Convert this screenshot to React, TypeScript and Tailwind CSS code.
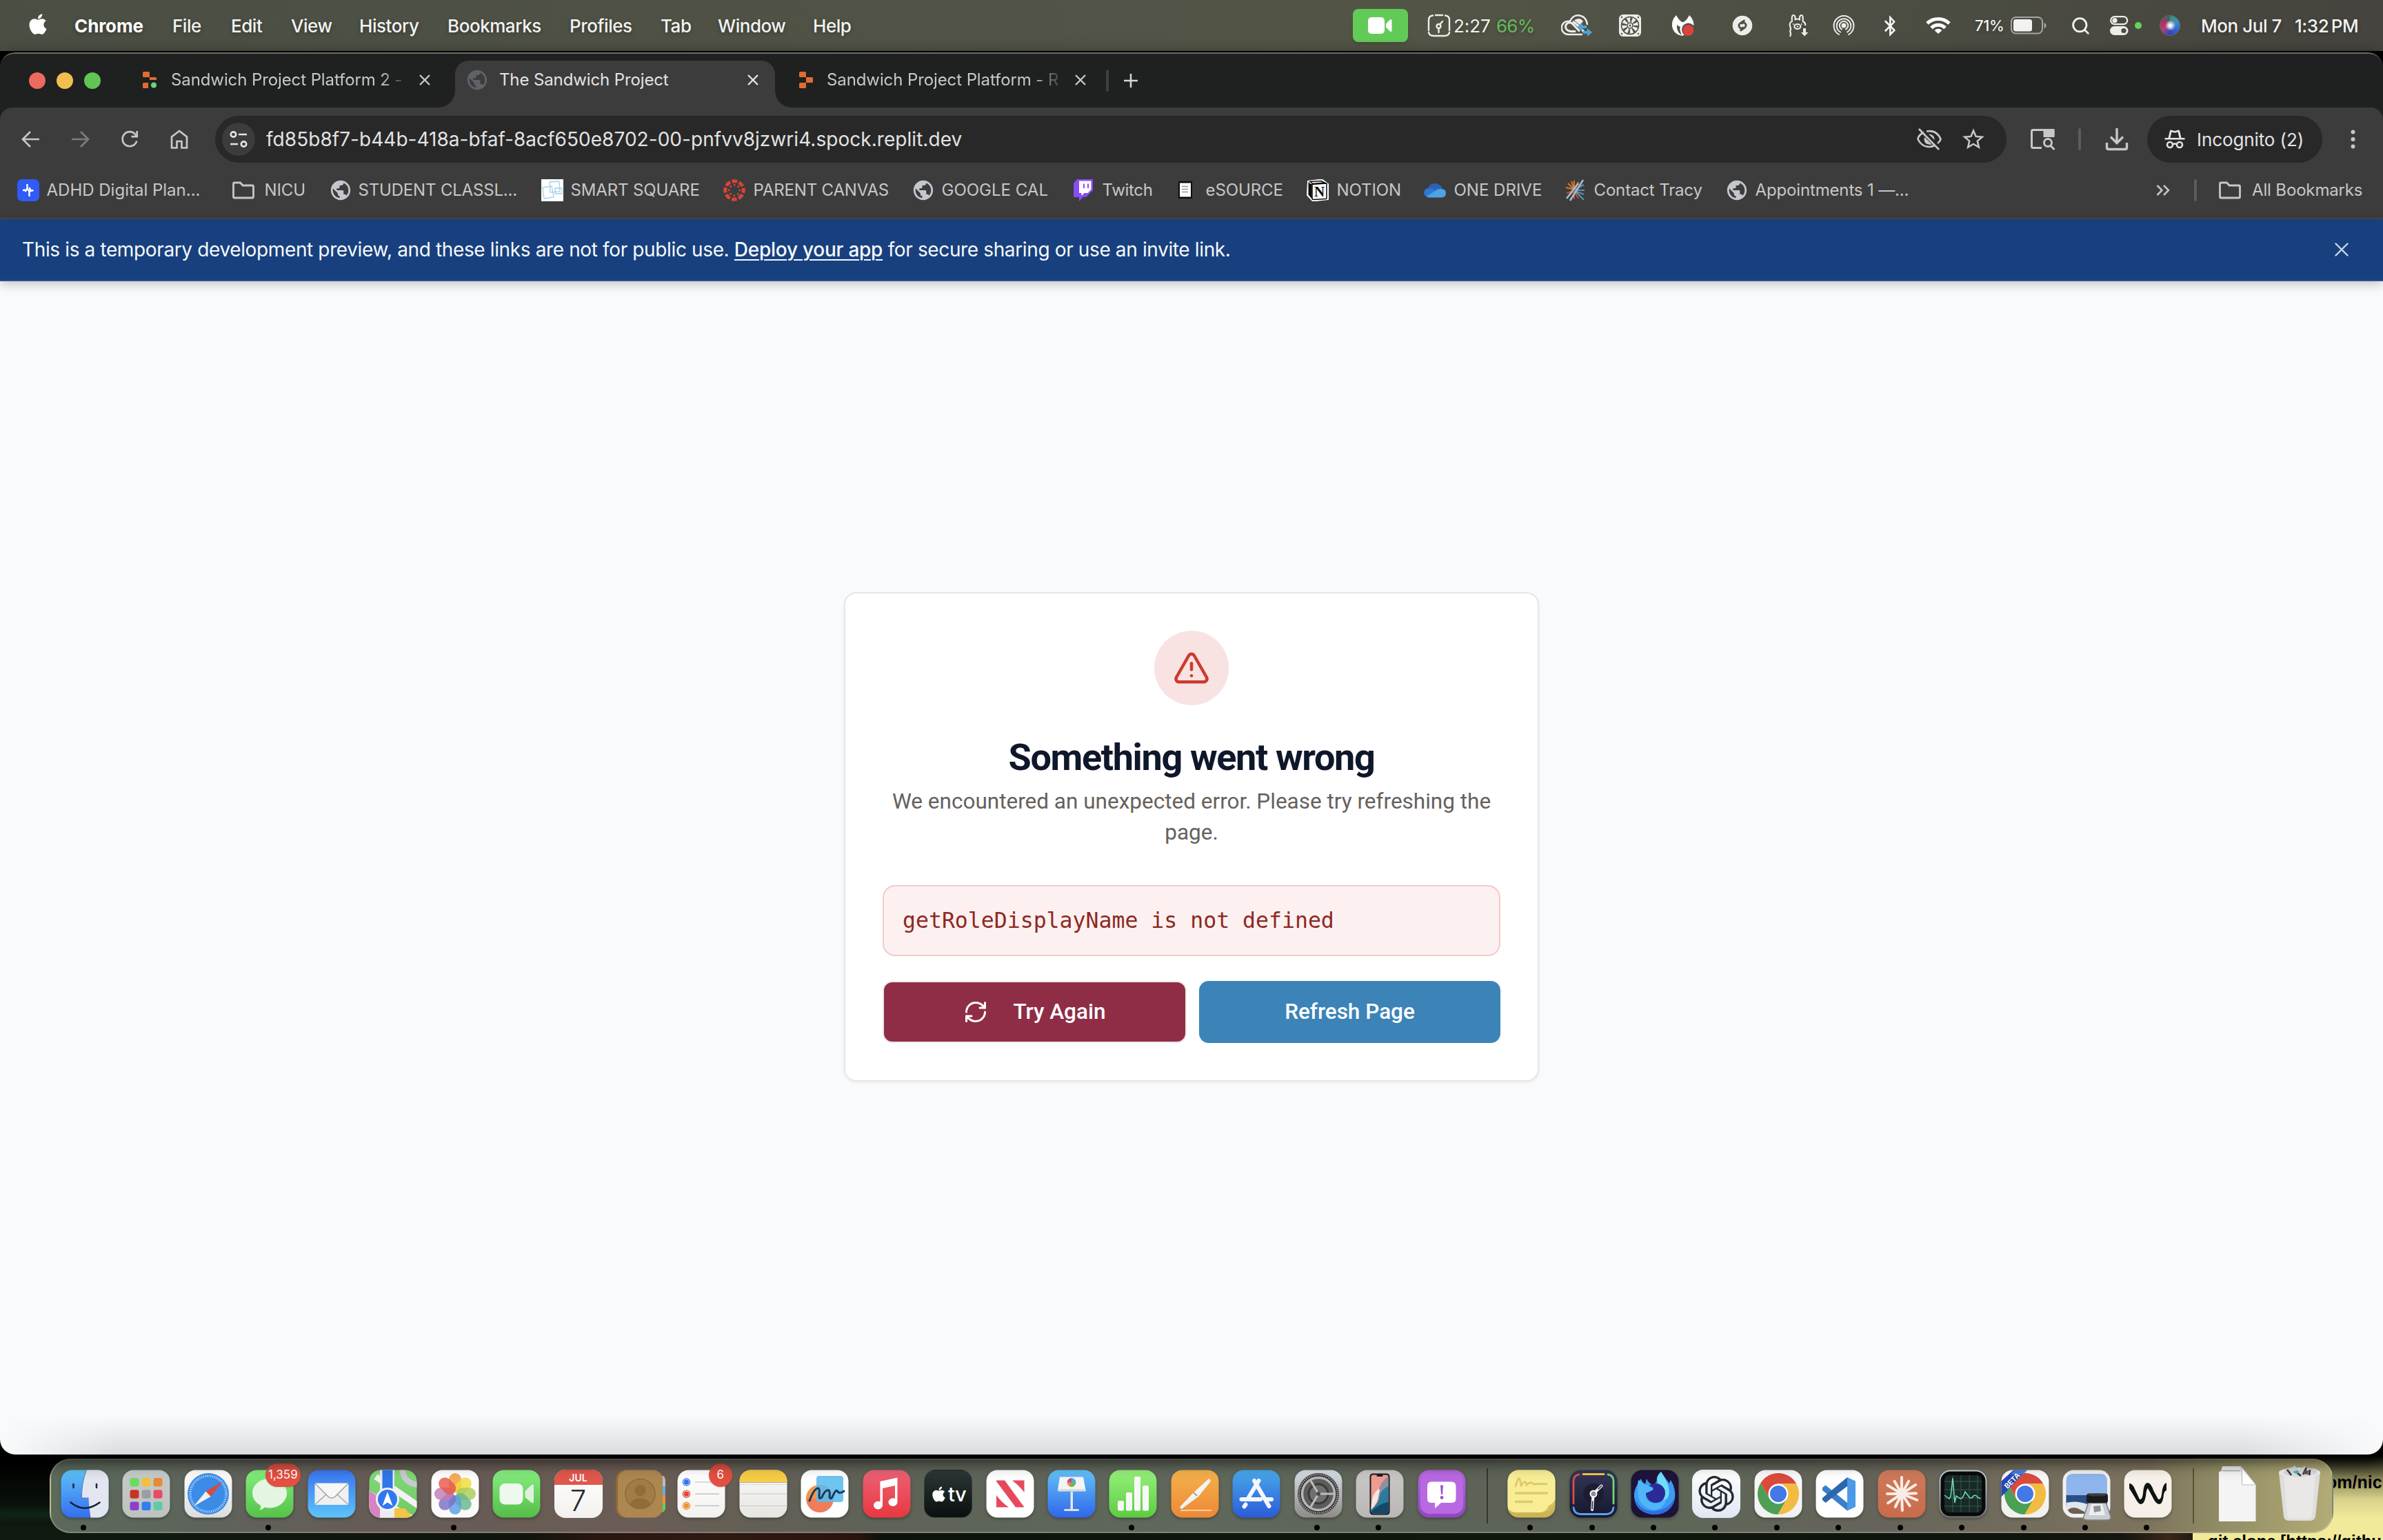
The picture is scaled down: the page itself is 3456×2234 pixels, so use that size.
import type { ReactNode } from "react";
import { FaApple, FaBluetoothB } from "react-icons/fa";
import { SiOpenai } from "react-icons/si";
import { MdPublic, MdOutlineStarOutline } from "react-icons/md";
import { Search, TriangleAlert, RefreshCw } from "lucide-react";

/* ---------- menu bar ---------- */

const menus = [
  { label: "File", cls: "w-[85px]" },
  { label: "Edit", cls: "w-[87px]" },
  { label: "View", cls: "w-[99px]" },
  { label: "History", cls: "w-[128px]" },
  { label: "Bookmarks", cls: "w-[177px]" },
  { label: "Profiles", cls: "w-[132px]" },
  { label: "Tab", cls: "w-[83px]" },
  { label: "Window", cls: "w-[138px]" },
  { label: "Help", cls: "w-[80px]" },
];

function Slot({ cls, children }: { cls: string; children: ReactNode }) {
  return <div className={`flex shrink-0 items-center whitespace-nowrap ${cls}`}>{children}</div>;
}

function MenuBar() {
  return (
    <div className="flex h-[74px] shrink-0 items-center bg-linear-to-r from-[#4b4e43] via-[#525546] via-60% to-[#45443e] text-[26px] font-medium tracking-[-0.45px] text-white/95 [text-shadow:0_2px_6px_rgba(0,0,0,0.3)]">
      <Slot cls="w-[108px] pl-[38px]">
        <FaApple className="mb-1 size-[34px] text-white" />
      </Slot>
      <Slot cls="w-[142px] font-bold tracking-[-0.1px] text-white">Chrome</Slot>
      {menus.map((m) => (
        <Slot key={m.label} cls={m.cls}>
          {m.label}
        </Slot>
      ))}
      <div className="flex-1" />
      <Slot cls="w-[108px]">
        <div className="flex h-12 w-[80px] items-center justify-center rounded-lg bg-[#62cb57] shadow-md">
          <svg width="36" height="24" viewBox="0 0 36 24" fill="#fff">
            <rect width="24" height="24" rx="5" />
            <path d="M26 9.5 32 3.5Q34.500 2 34.500 5V19Q34.500 22 32 20.500L26 14.500Z" />
          </svg>
        </div>
      </Slot>
      <Slot cls="w-[38px]">
        <svg width="34" height="34" viewBox="0 0 34 34" fill="none" stroke="#ececea" strokeWidth="2.4" strokeLinecap="round">
          <path d="M12 2h10M8 2.500Q2 3 2 9V24M26 2.500Q32 3 32 9V24M2 27Q3 32 9 32H25Q31 32 32 27" />
          <circle cx="16.500" cy="18" r="3" />
          <path d="M18.500 15 22 11M16.500 21V27" />
        </svg>
      </Slot>
      <Slot cls="w-[62px] font-normal tracking-[-0.1px]">2:27</Slot>
      <Slot cls="w-[94px] font-normal tracking-[-0.8px] text-[#65b95b]">66%</Slot>
      <Slot cls="w-[83px]">
        <svg width="46" height="34" viewBox="0 0 46 34" fill="none" stroke="#ececea" strokeWidth="2.400" strokeLinecap="round">
          <path d="M30 30H10.500A9.700 9.700 0 0 1 10.500 10.600Q12 10.500 13 10.800M13 10.500Q17 2 25 2.200 36 3 38 15" />
          <path d="M26 24.500 17.500 15.500A5.600 5.600 0 0 0 7.500 22Q10 25.500 14 25.500H20" strokeWidth="3" />
          <path d="M18 12Q22 14 33 26" strokeWidth="3.200" />
          <path d="M19 9.500Q27 4 32 11L27 16Z" fill="#ececea" stroke="none" />
          <path d="M24 19l7-6v4h6v4h-6v4ZM45 27l-7-6v4h-6v4h6v4Z" fill="#4aa3dc" stroke="none" />
        </svg>
      </Slot>
      <Slot cls="w-[77px]">
        <svg width="34" height="34" viewBox="0 0 34 34">
          <rect x="1" y="1" width="32" height="32" rx="6" fill="#ececea" />
          <circle cx="17" cy="17" r="12.500" fill="#ececea" stroke="#4c4f43" strokeWidth="1.600" />
          <circle cx="17" cy="17" r="8.500" fill="none" stroke="#4c4f43" strokeWidth="6.500" strokeDasharray="2.600 4.070" />
          <circle cx="17" cy="17" r="4" fill="#ececea" stroke="#4c4f43" strokeWidth="1.600" />
          <circle cx="17" cy="17" r="1.500" fill="#4c4f43" />
          <g fill="#4c4f43">
            <circle cx="5" cy="5" r="1.200" />
            <circle cx="29" cy="5" r="1.200" />
            <circle cx="5" cy="29" r="1.200" />
            <circle cx="29" cy="29" r="1.200" />
          </g>
        </svg>
      </Slot>
      <Slot cls="w-[88px]">
        <svg width="34" height="32" viewBox="0 0 34 32">
          <path d="M7 1Q11 9 16.500 11.500 22 9 26 1 34 9 32 18L18 30 16 31Q3 29 1 17 0 8 7 1ZM8 15Q7 25 15 30 11 21 13 18Q10 17 8 15Z" fill="#fff" fillRule="evenodd" />
          <circle cx="24.500" cy="22" r="9.500" fill="#4c4f43" />
          <circle cx="24.500" cy="23" r="8" fill="#d9433b" />
        </svg>
      </Slot>
      <Slot cls="w-[82px]">
        <svg width="30" height="30" viewBox="0 0 30 30">
          <circle cx="15" cy="15" r="14.300" fill="#ececea" />
          <g fill="none" stroke="#4c4f43" strokeWidth="2.800" strokeLinecap="round">
            <path d="M17.500 8 12 11.500Q8 15 11.500 18.500 13.500 20 15.500 18" />
            <path d="M12.500 22 18 18.500Q22 15 18.500 11.500 16.500 10 14.500 12" />
          </g>
        </svg>
      </Slot>
      <Slot cls="w-[64px]">
        <svg width="30" height="34" viewBox="0 0 30 34" fill="none" stroke="#ececea" strokeWidth="2.200" strokeLinejoin="round">
          <path d="M2 33Q4 29 2 25.500 4 22 2 18 1 12 5 11 4 2 7 2 10 2 9.500 8.500 13 6.500 16 8.500 15.500 2 18.500 2 21.500 2 20.500 11 25 13 24 17" />
          <ellipse cx="12.800" cy="18.500" rx="4.500" ry="3.500" />
          <path d="M12.800 17.500v2M6 15h1.500M18 15h1.500" />
          <path d="M21 21h4v6h3.500L23 32.500 18 27h3Z" fill="#ececea" stroke="none" />
        </svg>
      </Slot>
      <Slot cls="w-[73px]">
        <svg width="32" height="32" viewBox="0 0 32 32" fill="none" stroke="#ececea" strokeWidth="2" strokeLinecap="round">
          <circle cx="16" cy="16" r="2.500" fill="#ececea" />
          <path d="M13 21.500A6.200 6.200 0 1 1 19 21.500M11 25.500A10.300 10.300 0 1 1 21 25.500M9 29A14.400 14.400 0 1 1 23 29" />
        </svg>
      </Slot>
      <Slot cls="w-[62px]">
        <FaBluetoothB className="h-[31px] w-[20px]" />
      </Slot>
      <Slot cls="w-[71px]">
        <svg width="36" height="26" viewBox="0 0 36 26" fill="none" stroke="#fff" strokeWidth="5">
          <path d="M2 10A23 23 0 0 1 34 10" />
          <path d="M8 16.500A14 14 0 0 1 28 16.500" />
          <path d="M18 25 12.500 20Q18 15.500 23.500 20Z" fill="#fff" stroke="none" />
        </svg>
      </Slot>
      <Slot cls="w-[52px] text-[22px] tracking-[-0.3px]">71%</Slot>
      <Slot cls="w-[87px]">
        <svg width="52" height="26" viewBox="0 0 52 26">
          <rect x="1" y="1" width="45" height="23.500" rx="6.500" fill="none" stroke="#fff" strokeOpacity="0.5" strokeWidth="2" />
          <rect x="4" y="4" width="27" height="17.500" rx="3.500" fill="#f2f2f0" />
          <path d="M48.500 9Q51.500 10 51.500 13T48.500 17Z" fill="#fff" fillOpacity="0.5" />
        </svg>
      </Slot>
      <Slot cls="w-[57px]">
        <Search className="size-[29px]" strokeWidth={2.300} />
      </Slot>
      <Slot cls="w-[36px]">
        <svg width="27" height="28" viewBox="0 0 27 28">
          <rect x="1.200" y="1.200" width="24" height="11" rx="5.500" fill="none" stroke="#ececea" strokeWidth="2.200" />
          <circle cx="7" cy="6.700" r="3.600" fill="#ececea" />
          <rect y="15" width="26.500" height="13" rx="6.500" fill="#ececea" />
          <circle cx="20" cy="21.500" r="3.600" fill="#4c4b42" />
        </svg>
      </Slot>
      <Slot cls="w-[37px]">
        <span className="size-[10px] rounded-full bg-[#63d35a]" />
      </Slot>
      <Slot cls="w-[59px]">
        <div className="size-[28px] rounded-full bg-[radial-gradient(circle_at_52%_50%,#ffffff_6%,#c9c9e0_18%,transparent_38%),conic-gradient(from_0deg,#3a8f7a,#3f8fc0,#2f6ad8,#2f45b8,#b0407c,#b02f5c,#2f6d60)] ring-1 ring-white/20" />
      </Slot>
      <Slot cls="w-[136px]">Mon Jul 7</Slot>
      <Slot cls="w-[128px] [word-spacing:-3px]">1:32 PM</Slot>
    </div>
  );
}

/* ---------- browser tabs ---------- */

function CloseIcon({ cls }: { cls: string }) {
  return (
    <svg viewBox="0 0 16 16" fill="none" stroke="currentColor" strokeWidth="2.400" className={cls}>
      <path d="M1 1 15 15M15 1 1 15" />
    </svg>
  );
}

function ReplitIcon({ live }: { live?: boolean }) {
  return (
    <svg width="22" height="24" viewBox="0 0 22 24" fill="#e06c30" className="shrink-0">
      <path d="M0 1.500Q0 0 1.500 0H8.500Q10 0 10 1.500V8H1.500Q0 8 0 6.500Z" />
      {live ? (
        <>
          <path d="M10 8H18.500Q20 8 20 9.500V12H10Z" />
          <path d="M0 17.500Q0 16 1.500 16H8V24H1.500Q0 24 0 22.500Z" />
          <circle cx="16" cy="19.500" r="4" fill="#6bd37a" />
        </>
      ) : (
        <>
          <path d="M10 8H18.500Q20 8 20 9.500V14.500Q20 16 18.500 16H10Z" />
          <path d="M0 17.500Q0 16 1.500 16H10V22.500Q10 24 8.500 24H1.500Q0 24 0 22.500Z" />
        </>
      )}
    </svg>
  );
}

function TabStrip() {
  return (
    <div className="flex h-[78px] shrink-0 items-end bg-[#1f2120] text-[24px] text-[#c7c7c7]">
      <div className="flex h-[68px] w-[207px] shrink-0 items-center gap-4 pb-[10px] pl-[42px]">
        <span className="size-6 rounded-full bg-[#ed6a5e]" />
        <span className="size-6 rounded-full bg-[#f4be4f]" />
        <span className="size-6 rounded-full bg-[#61c554]" />
      </div>
      <div className="flex h-[68px] w-[453px] shrink-0 items-center pb-[12px]">
        <ReplitIcon live />
        <span className="ml-[19px] w-[338px] whitespace-nowrap tracking-[-0.1px] [mask-image:linear-gradient(to_right,black_90%,transparent_102%)]">
          Sandwich Project Platform 2 -
        </span>
        <CloseIcon cls="ml-[22px] size-4" />
      </div>
      <div className="relative flex h-[68px] w-[464px] shrink-0 items-center rounded-t-[20px] bg-[#3c3c3c] pb-[12px] pl-[15px]">
        <span className="absolute bottom-0 -left-6 size-6 bg-[radial-gradient(circle_at_top_left,transparent_23.500px,#3c3c3c_24px)]" />
        <span className="absolute -right-6 bottom-0 size-6 bg-[radial-gradient(circle_at_top_right,transparent_23.500px,#3c3c3c_24px)]" />
        <MdPublic className="size-[34px] shrink-0 text-[#5f6368]" />
        <span className="ml-[15px] w-[360px] whitespace-nowrap tracking-[-0.12px] text-[#e3e3e3]">The Sandwich Project</span>
        <CloseIcon cls="size-4 text-[#e3e3e3]" />
      </div>
      <div className="flex h-[68px] w-[480px] shrink-0 items-center pb-[12px] pl-[35px]">
        <ReplitIcon />
        <span className="ml-[18px] w-[338px] whitespace-nowrap tracking-[-0.1px] [mask-image:linear-gradient(to_right,black_88%,transparent_103%)]">
          Sandwich Project Platform - R
        </span>
        <CloseIcon cls="ml-[22px] size-4" />
      </div>
      <div className="flex h-[68px] items-center gap-[22px] pb-[10px]">
        <span className="h-8 w-[4px] rounded-full bg-[#3f4140]" />
        <svg width="20" height="20" viewBox="0 0 20 20" stroke="#d5d5d5" strokeWidth="2.600">
          <path d="M10 0V20M0 10H20" />
        </svg>
      </div>
    </div>
  );
}

/* ---------- toolbar ---------- */

function Toolbar() {
  return (
    <div className="bg-[#1f2120]">
      <div className="flex h-[92px] items-center rounded-t-[18px] bg-[#3c3c3c] text-[#c7c7c7]">
        <Slot cls="w-[73px] pl-[30px]">
          <svg width="28" height="26" viewBox="0 0 28 26" fill="none" stroke="currentColor" strokeWidth="2.700">
            <path d="M27 13H4M14 2 3 13 14 24" />
          </svg>
        </Slot>
        <Slot cls="w-[73px] pl-[30px]">
          <svg width="28" height="26" viewBox="0 0 28 26" fill="none" stroke="#7d7d7d" strokeWidth="2.700">
            <path d="M1 13H24M14 2 25 13 14 24" />
          </svg>
        </Slot>
        <Slot cls="w-[72px] pl-[29px]">
          <svg width="26" height="26" viewBox="0 0 26 26" fill="none" stroke="currentColor" strokeWidth="2.700">
            <path d="M23.300 15.500A10.500 10.500 0 1 1 21.500 6.300L23 8.500" />
            <path d="M23.700 1V9.200H15.500" />
          </svg>
        </Slot>
        <Slot cls="w-[94px] pl-[28px]">
          <svg width="28" height="30" viewBox="0 0 28 30" fill="none" stroke="currentColor" strokeWidth="2.700">
            <path d="M3 27.500V11.500L14 3 25 11.500V27.500H17.500V18H10.500V27.500Z" />
          </svg>
        </Slot>
        <div className="mr-[34px] flex h-[68px] flex-1 items-center rounded-full bg-[#282828] pl-[10px]">
          <div className="flex size-12 items-center justify-center rounded-full bg-[#3c3c3c]">
            <svg width="26" height="26" viewBox="0 0 26 26" fill="none" stroke="#e3e3e3" strokeWidth="2.700">
              <circle cx="5.500" cy="6" r="3.700" />
              <path d="M13 6H25M1 20H12" />
              <circle cx="20.500" cy="20" r="3.700" />
            </svg>
          </div>
          <span className="ml-4 flex-1 text-[28px] tracking-[0.04px] text-[#e3e3e3]">
            fd85b8f7-b44b-418a-bfaf-8acf650e8702-00-pnfvv8jzwri4.spock.replit.dev
          </span>
          <svg width="38" height="34" viewBox="0 0 38 34" fill="none" stroke="currentColor" strokeWidth="2.700">
            <path d="M11 7Q3 11 2.500 17 8 28 19 28 23 28 26.500 26M15 5.500Q30 3 35.500 17 34 21 31 23" />
            <path d="M4 2 33 32" />
            <path d="M19 9.500A7.500 7.500 0 0 1 26.500 18L18 9.500ZM12 14 23 24.500Q12 26 11.500 17Z" fill="currentColor" stroke="none" />
          </svg>
          <MdOutlineStarOutline className="mr-[29px] ml-[26px] size-[38px]" />
        </div>
        <Slot cls="w-[70px]">
          <svg width="38" height="34" viewBox="0 0 38 34" fill="none" stroke="currentColor" strokeWidth="3">
            <path d="M17 29.500H4.500Q2.500 29.500 2.500 27.500V5.500Q2.500 3.500 4.500 3.500H32Q34 3.500 34 5.500V12.500" />
            <path d="M21 3.500H34V12.500H21Z" fill="currentColor" />
            <circle cx="26" cy="22" r="5.500" />
            <path d="M30 26.500 35.500 32" />
          </svg>
        </Slot>
        <Slot cls="w-[39px]">
          <span className="h-8 w-[4px] rounded-full bg-[#5c5c5c]" />
        </Slot>
        <Slot cls="w-[61px]">
          <svg width="34" height="34" viewBox="0 0 34 34" fill="none" stroke="currentColor" strokeWidth="3.400">
            <path d="M17 1V22M8 13.500 17 22.500 26 13.500" />
            <path d="M2.500 22V29Q2.500 31.500 5 31.500H29Q31.500 31.500 31.500 29V22" />
          </svg>
        </Slot>
        <div className="flex h-[68px] w-[254px] items-center rounded-full bg-[#282828] pl-[24px] text-[26px] tracking-[-0.1px] text-[#e3e3e3]">
          <svg width="32" height="28" viewBox="0 0 32 28" fill="#e3e3e3">
            <path d="M10.500 0.500 16 2 21.500 0.500Q22.500 0.300 23 1.500L25.500 12H30.500V14.500H1.500V12H6.500L9 1.500Q9.500 0.300 10.500 0.500Z" />
            <path d="M9.500 12 11.500 3.500 16 4.800 20.500 3.500 22.500 12Z" fill="#282828" />
            <g fill="none" stroke="#e3e3e3" strokeWidth="2.600">
              <circle cx="9" cy="22" r="4" />
              <circle cx="23" cy="22" r="4" />
              <path d="M13 21.500Q16 19.500 19 21.500" />
            </g>
          </svg>
          <span className="ml-4">Incognito (2)</span>
        </div>
        <Slot cls="w-[88px] pl-[41px]">
          <svg width="7" height="28" viewBox="0 0 7 28" fill="currentColor">
            <circle cx="3.500" cy="3.500" r="3" />
            <circle cx="3.500" cy="14" r="3" />
            <circle cx="3.500" cy="24.500" r="3" />
          </svg>
        </Slot>
      </div>
    </div>
  );
}

/* ---------- bookmarks ---------- */

function FolderIcon() {
  return (
    <svg width="32" height="26" viewBox="0 0 32 26" fill="none" stroke="#c7c7c7" strokeWidth="2.800">
      <path d="M1.500 3.500Q1.500 2 3 2H11.500L15 6H29Q30.500 6 30.500 7.500V22.500Q30.500 24 29 24H3Q1.500 24 1.500 22.500Z" />
    </svg>
  );
}

const globe = <MdPublic className="-ml-[2px] size-[34px] text-[#c4c7ce]" />;

const adhd = (
  <svg width="32" height="32" viewBox="0 0 32 32">
    <rect width="32" height="32" rx="7" fill="#2f5bf6" />
    <path d="M14.500 7V13.500L17.500 17.500V25M8 16 13 15.500M14.500 13.500 11.500 18M17.500 17.500 23.500 16M17.500 12 20 17" fill="none" stroke="#fff" strokeWidth="2.400" />
  </svg>
);
const smartSquare = (
  <svg width="32" height="32" viewBox="0 0 32 32" fill="none" stroke="#9fd2ea" strokeWidth="1.300">
    <rect width="32" height="32" fill="#fff" stroke="none" />
    <path d="M12 4 26 3 27 18 13 19ZM2 12 15 10 18 26 4 28ZM20 13H30V21H20Z" />
  </svg>
);
const canvasRing = (
  <svg width="32" height="32" viewBox="0 0 32 32" fill="none" stroke="#dc4437">
    <circle cx="16" cy="16" r="13.200" strokeWidth="5" strokeDasharray="7.600 2.768" strokeDashoffset="3.800" />
    <circle cx="16" cy="16" r="7.700" strokeWidth="2.600" strokeDasharray="2.600 3.447" strokeDashoffset="1.300" />
  </svg>
);
const twitch = (
  <svg width="28" height="32" viewBox="0 0 28 32">
    <path d="M5 0H28V16L18 26H13.500L8 32V26H0V6Z" fill="#8a4cf5" />
    <path d="M8 2.500H25.500V15L20.500 20H15.500L11.500 24V20H8Z" fill="#fff" />
    <path d="M14 6.500H16V13H14ZM20 6.500H22V13H20Z" fill="#8a4cf5" />
  </svg>
);
const source = (
  <svg width="20" height="25" viewBox="0 0 20 25">
    <rect width="20" height="25" fill="#0b0b0b" />
    <rect x="2" y="2.500" width="16" height="20" fill="#fff" />
    <path d="M5 7.500H14M5 11.500H14M5 15.500H14" stroke="#999" strokeWidth="1.500" />
  </svg>
);
const notion = (
  <svg width="32" height="32" viewBox="0 0 32 32">
    <path d="M2 3 22 0.500 31 7V29L9 31.500 1 23Z" fill="#fff" stroke="#fff" strokeWidth="2" strokeLinejoin="round" />
    <path d="M2.500 4 7.500 8.500V28.500L2.500 22.500Z" fill="#0c0c0c" />
    <path d="M7 7.500 29 6V27.500Q29 28.500 28 28.500L10 29.500Q8 29.500 8 28V8ZM5 3.500 21 2.500 26 5 9 6.500Z" fill="none" stroke="#0c0c0c" strokeWidth="1.500" />
    <text x="18.500" y="25" textAnchor="middle" fontFamily="Liberation Serif" fontWeight="700" fontSize="21" fill="#0c0c0c">
      N
    </text>
  </svg>
);
const oneDrive = (
  <svg width="32" height="22" viewBox="0 0 32 22">
    <path d="M5 11Q7 1 16 1 24 1 27 9L18 15Z" fill="#2c62b8" />
    <path d="M0 14Q1 8 8 8 14 8 20 14L8 21Q0 21 0 14Z" fill="#2f78d2" />
    <path d="M4 20 20 9.500Q32 7 32 15 32 21 26 21.500H8Q5 21.500 4 20Z" fill="#4da3e6" />
  </svg>
);
const burst = (
  <svg width="30" height="32" viewBox="0 0 30 32" fill="none" strokeWidth="2">
    <path d="M14 15 5 6M14 15 2 12M14 15 10 3M14 15V2M14 15 20 4" stroke="#d9782d" />
    <path d="M14 17 3 20M14 17 5 25M14 18V29M14 17 20 28" stroke="#c2502f" />
    <path d="M15 15 28 8M15 16 29 16M15 17 28 22M16 18 28 30" stroke="#5f93ab" />
    <path d="M27 1 8 31M20 6 3 28" stroke="#a9b9d2" strokeWidth="2.600" />
  </svg>
);

const bookmarks: { icon: ReactNode; iconCls: string; label: string; cls: string }[] = [
  { icon: adhd, iconCls: "w-[43px]", label: "ADHD Digital Plan...", cls: "w-[269px] tracking-[0px]" },
  { icon: <FolderIcon />, iconCls: "w-[47px]", label: "NICU", cls: "w-[95px] tracking-[-0.1px]" },
  { icon: globe, iconCls: "w-[41px]", label: "STUDENT CLASSL...", cls: "w-[265px] tracking-[-0.180px]" },
  { icon: smartSquare, iconCls: "w-[43px]", label: "SMART SQUARE", cls: "w-[221px] tracking-[-0.140px]" },
  { icon: canvasRing, iconCls: "w-[44px]", label: "PARENT CANVAS", cls: "w-[231px] tracking-[-0.180px]" },
  { icon: globe, iconCls: "w-[42px]", label: "GOOGLE CAL", cls: "w-[191px] tracking-[0px]" },
  { icon: twitch, iconCls: "w-[42px]", label: "Twitch", cls: "w-[110px] tracking-[-0.3px]" },
  { icon: source, iconCls: "w-[40px]", label: "eSOURCE", cls: "w-[146px] tracking-[-0.1px]" },
  { icon: notion, iconCls: "w-[44px]", label: "NOTION", cls: "w-[126px] tracking-[-0.1px]" },
  { icon: oneDrive, iconCls: "w-[44px]", label: "ONE DRIVE", cls: "w-[160px] tracking-[0px]" },
  { icon: burst, iconCls: "w-[43px]", label: "Contact Tracy", cls: "w-[192px] tracking-[-0.150px]" },
  { icon: globe, iconCls: "w-[42px]", label: "Appointments 1 —...", cls: "w-[260px] tracking-[-0.150px]" },
];

function BookmarksBar() {
  return (
    <div className="flex h-[70px] shrink-0 items-center border-b-2 border-[#474747] bg-[#3c3c3c] pb-[13px] pl-[24.500px] text-[24px] text-[#c7c7c7]">
      {bookmarks.map((b) => (
        <div key={b.label} className="flex shrink-0 items-center">
          <div className={`flex shrink-0 items-center ${b.iconCls}`}>{b.icon}</div>
          <span className={`whitespace-nowrap ${b.cls}`}>{b.label}</span>
        </div>
      ))}
      <div className="flex-1" />
      <Slot cls="w-[55px]">
        <svg width="20" height="16" viewBox="0 0 20 16" fill="none" stroke="currentColor" strokeWidth="2.500">
          <path d="M1.500 1 8.500 8 1.500 15M11 1 18 8 11 15" />
        </svg>
      </Slot>
      <Slot cls="w-[36px]">
        <span className="h-8 w-[4px] rounded-full bg-[#5c5c5c]" />
      </Slot>
      <Slot cls="w-[48px]">
        <FolderIcon />
      </Slot>
      <Slot cls="w-[190px] tracking-[-0.150px]">All Bookmarks</Slot>
    </div>
  );
}

/* ---------- web page ---------- */

function Page() {
  return (
    <div className="relative flex flex-1 items-center justify-center bg-[#f9fafb]">
      <div className="absolute inset-x-0 top-0 z-10 flex h-[90px] items-center border-b-2 border-[#2b5293] bg-[#18407e] px-[32px] text-[28px] tracking-[-0.37px] text-[#f5f9fc] shadow-[0_4px_16px_rgba(0,0,0,0.22)]">
        <p className="flex-1">
          This is a temporary development preview, and these links are not for public use.{" "}
          <a className="font-medium tracking-[-0.25px] underline decoration-2 underline-offset-4">Deploy your app</a> for secure
          sharing or use an invite link.
        </p>
        <svg width="20" height="20" viewBox="0 0 20 20" fill="none" stroke="#c9d7ea" strokeWidth="2.400" strokeLinecap="round" className="mr-[18px]">
          <path d="M1.500 1.500 18.500 18.500M18.500 1.500 1.500 18.500" />
        </svg>
      </div>

      <div className="w-[1008px] rounded-[18px] border-2 border-[#e5e7eb] bg-white p-[54px] font-[Roboto] shadow-[0_2px_4px_rgba(0,0,0,0.06)]">
        <div className="flex flex-col items-center pb-[54px] text-center">
          <div className="mb-[36px] flex size-[108px] items-center justify-center rounded-full bg-[#f8e3e2]">
            <TriangleAlert className="size-[54px] text-[#cf392e]" />
          </div>
          <h3 className="mt-[13px] text-[54px] leading-none font-bold tracking-tight text-[#0f172a]">Something went wrong</h3>
          <p className="mt-[14px] text-[31.5px] leading-[45px] text-[#66615d]">
            We encountered an unexpected error. Please try refreshing the page.
          </p>
        </div>
        <div className="rounded-[18px] border-2 border-[#f4cbca] bg-[#fcf1f0] p-[27px]">
          <p className="font-['DejaVu_Sans_Mono'] text-[31.5px] leading-[45px] text-[#8e2822]">getRoleDisplayName is not defined</p>
        </div>
        <div className="mt-[36px] flex gap-[18px] text-[31.5px] font-medium text-white">
          <button className="flex h-[90px] flex-1 items-center justify-center gap-[36px] rounded-[14px] border-2 border-[#ece9e8] bg-[#8f2d46]">
            <RefreshCw className="size-[36px]" />
            Try Again
          </button>
          <button className="flex h-[90px] flex-1 items-center justify-center rounded-[14px] bg-[#3c84b8]">Refresh Page</button>
        </div>
      </div>

      <div className="absolute inset-x-0 bottom-0 h-[56px] bg-linear-to-b from-transparent to-black/12 [mask-image:linear-gradient(to_right,transparent,black_5%,black_94%,transparent)]" />
    </div>
  );
}

/* ---------- dock ---------- */

function Tile({ id, from, to, children }: { id: string; from: string; to: string; children?: ReactNode }) {
  return (
    <svg width="70" height="70" viewBox="0 0 70 70" className="drop-shadow-[0_2px_2px_rgba(0,0,0,0.3)]">
      <defs>
        <linearGradient id={`g-${id}`} x1="0" y1="0" x2="0" y2="1">
          <stop offset="0" stopColor={from} />
          <stop offset="1" stopColor={to} />
        </linearGradient>
        <clipPath id={`c-${id}`}>
          <rect x="0.500" y="0.500" width="69" height="69" rx="16" />
        </clipPath>
      </defs>
      <rect x="0.500" y="0.500" width="69" height="69" rx="16" fill={`url(#g-${id})`} />
      <g clipPath={`url(#c-${id})`}>{children}</g>
    </svg>
  );
}

function ChromeMark() {
  return (
    <>
      <path d="M61.300 20.500A30 30 0 0 0 9.300 19.500L22.400 42.250 35 20.500Z" fill="#da4b3b" />
      <path d="M9.300 19.500A30 30 0 0 0 34.400 65L47.560 42.250H22.400Z" fill="#4c9f54" />
      <path d="M34.400 65A30 30 0 0 0 61.300 20.500H35L47.560 42.250Z" fill="#f2bb42" />
      <circle cx="35" cy="35" r="14.500" fill="#fff" />
      <circle cx="35" cy="35" r="12" fill="#4378e6" />
    </>
  );
}

const finder = (
  <Tile id="finder" from="#5cc3f8" to="#356ef0">
    <path d="M37.500 0H70V70H43.500Q41 55 40.500 41H30.500Q30 20 37.500 0Z" fill="#e3e6f0" />
    <path d="M18.500 21V26M52 21V26" stroke="#1d2b45" strokeWidth="2.600" strokeLinecap="round" />
    <path d="M14.500 47.500Q34.500 64 56.500 47.500" fill="none" stroke="#14213a" strokeWidth="2.600" strokeLinecap="round" />
    <path d="M37.500 0Q30 20 30.500 41H40.500" fill="none" stroke="#5b77a8" strokeWidth="1" />
  </Tile>
);

const padColors = ["#6ddc5c", "#f3bf3c", "#e98a34", "#c93326", "#9a9ea3", "#ea4b62", "#8c3fc9", "#2f7ef2", "#62c9a6"];
const launchpad = (
  <Tile id="launch" from="#c6cac9" to="#bdc2c0">
    {padColors.map((c, i) => (
      <rect key={c} x={11.500 + (i % 3) * 17} y={12 + Math.floor(i / 3) * 17.200} width="13" height="12.500" rx="3.200" fill={c} />
    ))}
  </Tile>
);

const safari = (
  <Tile id="safari" from="#ffffff" to="#dcdcdc">
    <circle cx="35" cy="35" r="30" fill="#3b8ce6" />
    <circle cx="35" cy="35" r="26" fill="none" stroke="#d8eafc" strokeWidth="3.500" strokeDasharray="0.900 1.823" />
    <path d="M56 17 38.500 39 31.500 31.500Z" fill="#e0463a" />
    <path d="M14 53 31.500 31.500 38.500 39Z" fill="#f1f1f1" />
  </Tile>
);

const messages = (
  <Tile id="msg" from="#83ee7d" to="#55c249">
    <path d="M35 13C49 13 60 22.500 60 34S49 55.500 35 55.500Q31 55.500 27.500 54.500 25 58 20 58.500 23 55.500 22 52 10 45.500 10 34C10 22.500 21 13 35 13Z" fill="#e4f6e2" />
  </Tile>
);

const mail = (
  <Tile id="mail" from="#3a74ee" to="#5dc4fa">
    <rect x="10.500" y="19.500" width="49" height="31.500" rx="2.500" fill="#f0f0f0" />
    <path d="M11.500 50 28 35M58.500 50 42 35" stroke="#a9a9ab" strokeWidth="1.500" />
    <path d="M11.500 20.500 30 39Q35 43.500 40 39L58.500 20.500" fill="#f7f7f7" stroke="#a0a0a3" strokeWidth="1.500" />
  </Tile>
);

const maps = (
  <Tile id="maps" from="#82d876" to="#70ca66">
    <path d="M0 30 70 70H0Z" fill="#ececef" />
    <path d="M0 30 18 42V70H0Z" fill="#d983c4" />
    <path d="M10 10 80 58" stroke="#f2f2f4" strokeWidth="9" />
    <path d="M36 56 52 56 64 70H36Z" fill="#f3c544" />
    <path d="M16 0H37V70H16Z" fill="#ececef" />
    <path d="M19.500 0H34.500V45H19.500Z" fill="#2e76ea" />
    <path d="M48 -4Q49 20 72 22" fill="none" stroke="#c9c9d4" strokeWidth="8" />
    <circle cx="27" cy="43" r="17" fill="#f1f1f5" />
    <circle cx="27" cy="43" r="14" fill="#3077f0" />
    <path d="M27 32 34.500 52.500 27 47.500 19.500 52.500Z" fill="#fff" />
  </Tile>
);

const petals = [
  { a: 0, c: "#f29a38" },
  { a: 45, c: "#eedc3c" },
  { a: 90, c: "#a9cc55" },
  { a: 135, c: "#66b78c" },
  { a: 180, c: "#5c9fe0" },
  { a: 225, c: "#7a6fc7" },
  { a: 270, c: "#c27bb5" },
  { a: 315, c: "#e8584a" },
];
const photos = (
  <Tile id="photos" from="#ffffff" to="#fafafa">
    {petals.map((p) => (
      <rect key={p.a} x="26" y="5" width="18" height="28" rx="9" fill={p.c} fillOpacity="0.82" transform={`rotate(${p.a} 35 35)`} />
    ))}
  </Tile>
);

const facetime = (
  <Tile id="facetime" from="#85ee80" to="#55bd48">
    <rect x="10.500" y="20" width="34" height="30.500" rx="8" fill="#eef8ed" />
    <path d="M47.500 31 57 22Q60 20.500 60 24V46Q60 49.500 57 48L47.500 40Z" fill="#dff1dd" />
  </Tile>
);

const calendar = (
  <div className="flex size-[70px] flex-col items-center overflow-hidden rounded-[16px] bg-linear-to-b from-white to-[#f3f1ef]">
    <div className="flex h-[22px] w-full items-center justify-center bg-[#e0574c] font-[Inter] text-[14px] font-semibold text-white">JUL</div>
    <div className="-mt-[1px] font-[Inter] text-[42px] leading-[48px] font-light text-[#2a2a2a]">7</div>
  </div>
);

const contacts = (
  <svg width="74" height="70" viewBox="0 0 74 70">
    <path d="M62 9H68Q72 10 72 16V24H62Z" fill="#b9bcc0" />
    <path d="M62 24H72V37H62Z" fill="#5faee0" />
    <path d="M62 37H72V49H62Z" fill="#ec9137" />
    <path d="M62 49H72V56Q72 61 66 62H62Z" fill="#66cb60" />
    <rect y="0.500" width="30" height="69" rx="14" fill="#8d6a39" />
    <rect x="3" y="0.500" width="65" height="69" rx="14" fill="#ac8750" />
    <circle cx="35.500" cy="35" r="21.500" fill="#a37c44" stroke="#8c6a3a" strokeWidth="1.500" />
    <circle cx="35.500" cy="30" r="8" fill="#8f6c3a" />
    <path d="M20 49.500Q26 41.500 35.500 41.500T51 49.500Q45 56.500 35.500 56.500T20 49.500Z" fill="#8f6c3a" />
  </svg>
);

const reminders = (
  <Tile id="rem" from="#ffffff" to="#f2f1ef">
    {["#2f73ee", "#e0483b", "#ec9432"].map((c, i) => (
      <g key={c}>
        <circle cx="13.500" cy={18 + i * 17.200} r="5.200" fill="none" stroke={c} strokeWidth="1.200" />
        <circle cx="13.500" cy={18 + i * 17.200} r="3.800" fill={c} />
        <path d={`M26 ${18 + i * 17.200}H61`} stroke="#b9b9b9" strokeWidth="1.200" />
      </g>
    ))}
  </Tile>
);

const notes = (
  <Tile id="notes" from="#fafafa" to="#e6e5e1">
    <rect width="70" height="18" fill="#f7cd45" />
    <path d="M0 18.500H70" stroke="#b9a98a" strokeWidth="1.200" />
    <path d="M1 21.500H70" stroke="#b4b4b4" strokeWidth="1" strokeDasharray="1 1.500" />
    <path d="M0 35H70M0 52.500H70" stroke="#c9c8c4" strokeWidth="1.200" />
  </Tile>
);

const freeform = (
  <Tile id="free" from="#ffffff" to="#ffffff">
    <circle cx="28" cy="42" r="20" fill="#ef7d5a" />
    <path d="M8 42A20 20 0 0 1 28 22V42Z" fill="#f2a13f" fillOpacity="0.7" />
    <rect x="23" y="9" width="39" height="38" rx="4" fill="#5bbcee" fillOpacity="0.88" />
    <path d="M13 45Q20 26 26 27 28 28 27 38 27 44 31 40 36 28 41 30 43 32 42 40 44 44 47 38 51 28 53.500 31 56 36 63 31" fill="none" stroke="#17395e" strokeWidth="3" strokeLinecap="round" />
  </Tile>
);

const music = (
  <Tile id="music" from="#ec6276" to="#e8383f">
    <path d="M25.500 17 50.500 11.500V47A6.500 5.800 0 1 1 47 42V23L29 27V51.500A6.500 5.800 0 1 1 25.500 46.500Z" fill="#fff" />
  </Tile>
);

const appleTv = (
  <div className="flex size-[70px] items-center justify-center rounded-[16px] border border-white/10 bg-linear-to-b from-[#2c3835] to-[#0b0f10] text-white">
    <FaApple className="mr-[1px] size-[25px]" />
    <span className="font-[Inter] text-[29px] leading-none font-medium tracking-[-0.5px]">tv</span>
  </div>
);

const news = (
  <Tile id="news" from="#ffffff" to="#ffffff">
    <path d="M15 15.500H27L55.500 54.500H43L15 17Z" fill="#e8485c" />
    <path d="M38 15.500H55.500V33Q49 24 38 15.500ZM15 37Q22 47 33 54.500H15Z" fill="#e8485c" />
  </Tile>
);

const keynote = (
  <Tile id="key" from="#63c2f8" to="#2f66ea">
    <path d="M18 10.500H52L55.500 30H15Z" fill="#f4f4f6" />
    <rect x="15" y="28" width="41" height="3.500" rx="1.500" fill="#dcdce0" />
    <circle cx="35" cy="18.500" r="6.300" fill="#e98c3a" />
    <path d="M35 18.500V12.200A6.300 6.300 0 0 1 41.300 18.500Z" fill="#52a8e8" />
    <path d="M35 18.500H41.300A6.300 6.300 0 0 1 33 24.500Z" fill="#62bb57" />
    <path d="M35 18.500V12.200A6.300 6.300 0 0 0 28.700 18.500Z" fill="#c74a8e" />
    <path d="M33.500 32H37V57H33.500Z" fill="#e6e6ea" />
    <rect x="24" y="57" width="22" height="3" rx="1.500" fill="#dedee3" />
  </Tile>
);

const numbers = (
  <Tile id="num" from="#96f07a" to="#5dcc42">
    <g fill="#f7f9f6">
      <rect x="13" y="45" width="9" height="14.500" rx="2" />
      <rect x="25" y="33" width="9" height="26.500" rx="2" />
      <rect x="37" y="10" width="9" height="49.500" rx="2" />
      <rect x="49" y="23" width="9" height="36.500" rx="2" />
    </g>
  </Tile>
);

const pages = (
  <Tile id="pages" from="#f4b24a" to="#ee8836">
    <path d="M13 59H59" stroke="#f8cf9f" strokeWidth="2" />
    <path d="M55 13Q59 14 57 18L40 39 17 56 12.500 59 14 53 33 33Z" fill="#f4f2f0" />
    <path d="M33 33 38 38M12 59.500 15 56.500" stroke="#8a8078" strokeWidth="1.500" />
  </Tile>
);

const appStore = (
  <Tile id="store" from="#48a9ea" to="#2b5cd8">
    <g stroke="#f4f7fc" strokeWidth="6" strokeLinecap="round">
      <path d="M38.500 16 24 40M32 16 53.500 53M13.500 43H41M50 43H57M19.500 50.500 17.500 53.500" />
    </g>
  </Tile>
);

const settings = (
  <Tile id="set" from="#d7dfe6" to="#8e8b88">
    <circle cx="35" cy="35" r="30" fill="#2f2f30" />
    <circle cx="35" cy="35" r="28" fill="none" stroke="#9a9a9a" strokeWidth="3" strokeDasharray="1.600 1.332" />
    <circle cx="35" cy="35" r="23.500" fill="#5c5c5d" stroke="#b7b7b7" strokeWidth="3.500" />
    <circle cx="35" cy="35" r="14" fill="#6f6f70" stroke="#3a3a3a" strokeWidth="3" />
    <path d="M35 35H57M35 35 24 16M35 35 24 54" stroke="#bdbdbd" strokeWidth="3" />
    <circle cx="35" cy="35" r="3" fill="#4a4a4a" />
  </Tile>
);

const phone = (
  <Tile id="phone" from="#c9c8c6" to="#b9b8b6">
    <rect x="20.500" y="5.500" width="29" height="60" rx="4.500" fill="#191a1e" />
    <rect x="22.500" y="7.500" width="25" height="56" rx="3" fill="#f09b8e" />
    <path d="M47.500 10V26Q36 34 33 44 31 20 47.500 10Z" fill="#8f8fa2" />
    <path d="M47.500 24V60Q47.500 63.500 44.500 63.500H24Q22.500 63 22.500 61V58Q34 48 35 37 38 28 47.500 24Z" fill="#2a7c9c" />
    <path d="M47.500 47V60Q47.500 63.500 44.500 63.500H24Q22.500 63 22.500 61 32 50 47.500 47Z" fill="#164766" />
    <path d="M22.500 58Q33 48 34 34 36 29 34 28 22.500 34 22.500 58Z" fill="#f6e4e1" />
    <rect x="30.500" y="7" width="9" height="3" rx="1.500" fill="#191a1e" />
  </Tile>
);

const feedback = (
  <Tile id="feed" from="#b366da" to="#8f48c0">
    <rect x="4" y="4" width="62" height="60" rx="13" fill="#b869e2" />
    <path d="M20 17.500H49Q55.500 17.500 55.500 24V42Q55.500 48 49 48H34L25 56V48H20Q14 48 14 42V24Q14 17.500 20 17.500Z" fill="#fff" />
    <path d="M33 22.500H37L36 36H34Z" fill="#9b52cf" />
    <circle cx="35" cy="40.500" r="2.400" fill="#9b52cf" />
  </Tile>
);

const stickies = (
  <Tile id="stick" from="#e0cd6e" to="#cbb355">
    <path d="M0 0H70V42Q66 60 48 62H14Q0 62 0 50Z" fill="#f8ed95" />
    <path d="M70 42Q66 60 48 62 58 60 60 52 66 50 70 42Z" fill="#d3bd5e" />
    <path d="M12 25Q16 8 18 14T20 24Q26 12 28 22 34 16 38 21 48 20 58 21" fill="none" stroke="#dccb6b" strokeWidth="2.800" />
    <path d="M11 34H59M11 46.500H37" stroke="#dccb6b" strokeWidth="3.500" />
  </Tile>
);

const timing = (
  <Tile id="timing" from="#33365a" to="#15172a">
    <circle cx="35" cy="35" r="15" fill="#1c1e30" />
    <g fill="none" strokeWidth="2.800" strokeLinecap="round">
      <path d="M20 6.500H50" stroke="#f0c63f" />
      <path d="M14 7Q6 8 6 17V49" stroke="#dd4f45" />
      <path d="M56 7Q64 8 64 17V49" stroke="#74d66d" />
      <path d="M6 55Q7 64 16 64.500H54Q63 64 64 55" stroke="#5d9df0" />
    </g>
    <path d="M35 35 46.500 23.500M34.500 38 33 58" stroke="#f4f4f6" strokeWidth="4" strokeLinecap="round" />
    <path d="M42 28 46.500 23.500M33.700 46 33 57" stroke="#24263c" strokeWidth="1.500" strokeLinecap="round" />
    <circle cx="35" cy="35" r="4.500" fill="#8b8da0" stroke="#fff" strokeWidth="2" />
  </Tile>
);

const firefox = (
  <Tile id="fox" from="#20143c" to="#1d1236">
    <path d="M44 3Q50 12 56 20 57 16 58 15 66 28 64 42 59 64 35 65 8 64 5 40 4 30 10 21 11 17 15 13 16 18 21 21L23 13Q26 20 32 22 38 20 38 12 40 6 44 3Z" fill="#3a9cf2" />
    <path d="M44 3Q50 12 54 22 60 40 46 48 52 36 44 26 38 20 38 12 40 6 44 3Z" fill="#6fdcfb" />
    <circle cx="36" cy="34" r="14" fill="#2b2a96" />
    <path d="M10 21 11 15 21 21 32 26Q34 29 29 31L22 34Q20 46 34 49 46 50 52 40 48 60 30 58 10 52 10 30Z" fill="#4fb6f8" />
    <path d="M6 42Q14 60 34 60 56 58 64 40 60 64 35 65 10 64 6 42Z" fill="#2d6fe0" />
  </Tile>
);

const chatgpt = (
  <div className="flex size-[70px] items-center justify-center rounded-[16px] bg-linear-to-b from-white to-[#e1e7f2]">
    <SiOpenai className="size-[52px] text-[#22292f]" />
  </div>
);

const chrome = (
  <Tile id="chrome" from="#fafafa" to="#f0f0f0">
    <ChromeMark />
  </Tile>
);

const vscode = (
  <Tile id="vsc" from="#ffffff" to="#ffffff">
    <path d="M10 26 14.500 22.500 46 48V59.500L10 30Z" fill="#3a7fcb" />
    <path d="M46 11V24L14.500 48 10 44V41Z" fill="#2a67ac" />
    <path d="M46 11 58 16.500V54L46 59.500Z" fill="#4a9ae6" />
  </Tile>
);

const claude = (
  <Tile id="claude" from="#cf7a5c" to="#c96b4a">
    <g stroke="#f9ece6" strokeWidth="4" strokeLinecap="round">
      {[0, 29, 57, 88, 112, 146, 178, 206, 236, 270, 301, 330].map((a, i) => (
        <path key={a} d={i % 2 ? "M35 35V14" : "M35 35V11"} transform={`rotate(${a} 35 35)`} />
      ))}
    </g>
    <circle cx="35" cy="35" r="7" fill="#f9ece6" />
  </Tile>
);

const activity = (
  <Tile id="act" from="#c8dbe2" to="#75767b">
    <rect x="2.500" y="2.500" width="65" height="65" rx="14" fill="#0a0a0b" />
    <rect x="8" y="8" width="54" height="54" rx="7" fill="#182a26" />
    <path d="M20 8V62M32 8V62M44 8V62M56 8V62M8 17H62M8 29H62M8 41H62M8 53H62" stroke="#3c6158" strokeWidth="0.900" />
    <path d="M8 37 15 42 17 39 20 12 23 48 25 38 31 42Q35 42 38 32 41 36 44 40 47 43 50 38 54 36 56 40L60 42" fill="none" stroke="#74dcb8" strokeWidth="1.500" />
  </Tile>
);

const chromeBeta = (
  <Tile id="beta" from="#fafafa" to="#f0f0f0">
    <ChromeMark />
    <path d="M0 40V17L21 -2H39Z" fill="#2748b4" />
    <path d="M20 0H39L33 7H14Z" fill="#4d8be2" fillOpacity="0.8" />
    <text transform="translate(19 18.500) rotate(-46)" textAnchor="middle" fontFamily="Inter" fontWeight="700" fontSize="10.500" fill="#fff">
      BETA
    </text>
  </Tile>
);

const preview = (
  <svg width="74" height="74" viewBox="0 0 74 74" className="mb-[-4px]">
    <rect x="0.500" y="0.500" width="69" height="69" rx="16" fill="#f1f1f1" />
    <path d="M5.500 17Q5.500 6 16 6H55Q65 6 65 17V38H5.500Z" fill="#8fb6ec" />
    <path d="M5.500 37H65V53H5.500Z" fill="#2a4f86" />
    <path d="M5.500 48Q20 44 36 50T65 50V54Q65 64 55 64H16Q6 63 5.500 54Z" fill="#dfe6ec" />
    <path d="M8 58Q16 52 26 58L38 64H16Q9 63 8 58Z" fill="#6e5f50" />
    <path d="M38 47H63L70 68Q71 73 64 73H37Q29 73 31 68Z" fill="#c9ccd0" stroke="#7f8489" strokeWidth="1.500" />
    <path d="M42 50H58L62 66H38Z" fill="#eceef0" />
    <path d="M45 53 55 52 56 60 46 62Z" fill="#8d9298" />
    <rect x="35" y="34.500" width="31" height="14" rx="4" fill="#1b1b1d" />
    <ellipse cx="50.500" cy="36.500" rx="14" ry="2" fill="#3d3d40" />
  </svg>
);

const wispr = (
  <Tile id="w" from="#f7f2ea" to="#f5efe7">
    <path d="M8 20Q13 20 16 28L23 43Q27 44 28 34 29 19 35 19 40 20 43 30L50 43Q54 44 55 36 56 21 62 19V30Q58 31 57.500 40 56 50 51 50 46 49 42 40L35 27Q33 27 32 38 30 50 25 50 21 50 16 40L8 27Z" fill="#0c1512" />
  </Tile>
);

const leftDock: { icon: ReactNode; open?: boolean; badge?: string }[] = [
  { icon: finder, open: true },
  { icon: launchpad },
  { icon: safari },
  { icon: messages, open: true, badge: "1,359" },
  { icon: mail },
  { icon: maps },
  { icon: photos, open: true },
  { icon: facetime },
  { icon: calendar },
  { icon: contacts },
  { icon: reminders, badge: "6" },
  { icon: notes },
  { icon: freeform },
  { icon: music },
  { icon: appleTv },
  { icon: news },
  { icon: keynote },
  { icon: numbers, open: true },
  { icon: pages },
  { icon: appStore },
  { icon: settings, open: true },
  { icon: phone, open: true },
  { icon: feedback },
];

const rightDock = [stickies, timing, firefox, chatgpt, chrome, vscode, claude, activity, chromeBeta, preview, wispr];

function DockItem({ icon, open, badge }: { icon: ReactNode; open?: boolean; badge?: string }) {
  return (
    <div className="relative flex w-[89.450px] shrink-0 flex-col items-start">
      {icon}
      {badge && (
        <span className="absolute -top-[9px] right-[10px] flex h-[34px] min-w-[34px] items-center justify-center rounded-full bg-[#e34f40] px-[4px] font-[Inter] text-[17px] text-white shadow">
          {badge}
        </span>
      )}
      {open && <span className="mt-[10px] ml-[29px] size-2 rounded-full bg-black" />}
    </div>
  );
}

function Dock() {
  return (
    <div className="ml-[72px] flex h-[108px] w-[3312px] items-start rounded-[30px] border-2 border-white/20 bg-[linear-gradient(to_right,#5b6a5a_0%,#5e635b_7%,#655c57_13%,#6a5c54_25%,#5e6257_36%,#60675b_50%,#5d6357_62%,#5e6658_72%,#66645a_80%,#756e5d_88%,#7d745e_92%,#938f66_95.500%,#b3ab76_100%)] pt-[14px] pl-[14px]">
      {leftDock.map((d, i) => (
        <DockItem key={i} icon={d.icon} open={d.open} badge={d.badge} />
      ))}
      <div className="flex w-[41px] shrink-0 justify-start pl-[11px]">
        <span className="-mt-[2px] h-[80px] w-[2px] bg-black/45" />
      </div>
      {rightDock.map((icon, i) => (
        <DockItem key={i} icon={icon} open />
      ))}
      <div className="flex w-[47px] shrink-0 pl-[10px]">
        <span className="-mt-[2px] h-[80px] w-[2px] bg-[#5a532f]" />
      </div>
      <svg width="56" height="82" viewBox="0 0 56 82" className="-mt-[6px] mr-[31px] shrink-0">
        <path d="M1 9 5 8 6 1H33L52 28V81H1Z" fill="#f6f6f6" />
        <path d="M1 9H34L54.500 28V81H1Z" fill="#f4f4f4" />
        <path d="M6 1H33L36 9H4Z" fill="#efefef" />
        <path d="M6 7.500H32" stroke="#a8a8a8" strokeWidth="1.500" />
        <path d="M33 1 54.500 28H36Q34 28 34.500 25Q35 10 33 1Z" fill="#fff" stroke="#bdbdbd" strokeWidth="1.200" />
      </svg>
      <svg width="62" height="82" viewBox="0 0 62 82" className="-mt-[6px] shrink-0">
        <path d="M1 10H61L54 74Q53 80 45 80H17Q9 80 8 74Z" fill="#dededc" />
        <path d="M8 14H54L49 72Q48 77 43 77H20Q14 77 13 72Z" fill="#e9e8e7" />
        <ellipse cx="31" cy="10" rx="30" ry="7" fill="#f1f1f1" />
        <path d="M7 12 12 4 19 3 24 0 29 6 38 1 46 5 54 4 57 11Q44 17 31 17T7 12Z" fill="#dcdcdc" />
        <path d="M13 6 19 14M41 3 36 13M46 6 45 14M28 11 33 15" stroke="#3a3a40" strokeWidth="2.800" />
        <path d="M21 9 27 7 31 9 26 12Z" fill="#3fb6c9" />
        <path d="M37 8 44 7 43 13 36 12Z" fill="#6b4a58" />
      </svg>
    </div>
  );
}

export default function App() {
  return (
    <div className="relative flex h-[2234px] w-[3456px] flex-col overflow-hidden bg-black font-[Inter,sans-serif]">
      <MenuBar />
      <div className="z-10 mt-[2px] flex h-[2034px] shrink-0 flex-col overflow-hidden rounded-[22px] border-t-2 border-[#6c6c6c] shadow-[0_8px_24px_rgba(0,0,0,0.8)]">
        <TabStrip />
        <Toolbar />
        <BookmarksBar />
        <Page />
      </div>
      <div className="relative -mt-[30px] flex h-[154px] flex-col bg-[radial-gradient(ellipse_at_2%_75%,#14301d_0%,transparent_8%),linear-gradient(to_right,#101a10_0%,#0f150d_22%,#2a1710_25%,#2f1a12_30%,#2b140e_36%,#0c130b_37%,#10180e_60%,#0d150c_84%,#14150f_89%,#3a281b_91%,#0d0d0a_93%)] pt-[36px]">
        <div className="absolute inset-0 bg-linear-to-b from-black from-25% to-transparent to-90%" />
        <div className="absolute top-0 right-0 h-[154px] w-[276px] overflow-hidden bg-[#f1ea9b] font-['Liberation_Sans'] leading-none font-bold text-black">
          <div className="absolute inset-0 bg-[linear-gradient(to_bottom,#000_20%,rgba(0,0,0,0.45)_42%,rgba(0,0,0,0.1)_62%,transparent_80%)]" />
          <span className="absolute top-[58px] left-[194px] text-[25px] whitespace-nowrap">om/nicu</span>
          <span className="absolute top-[144px] left-[22px] text-[24px] whitespace-nowrap">git clone [https://githu</span>
        </div>
        <div className="relative">
          <Dock />
        </div>
      </div>
    </div>
  );
}
